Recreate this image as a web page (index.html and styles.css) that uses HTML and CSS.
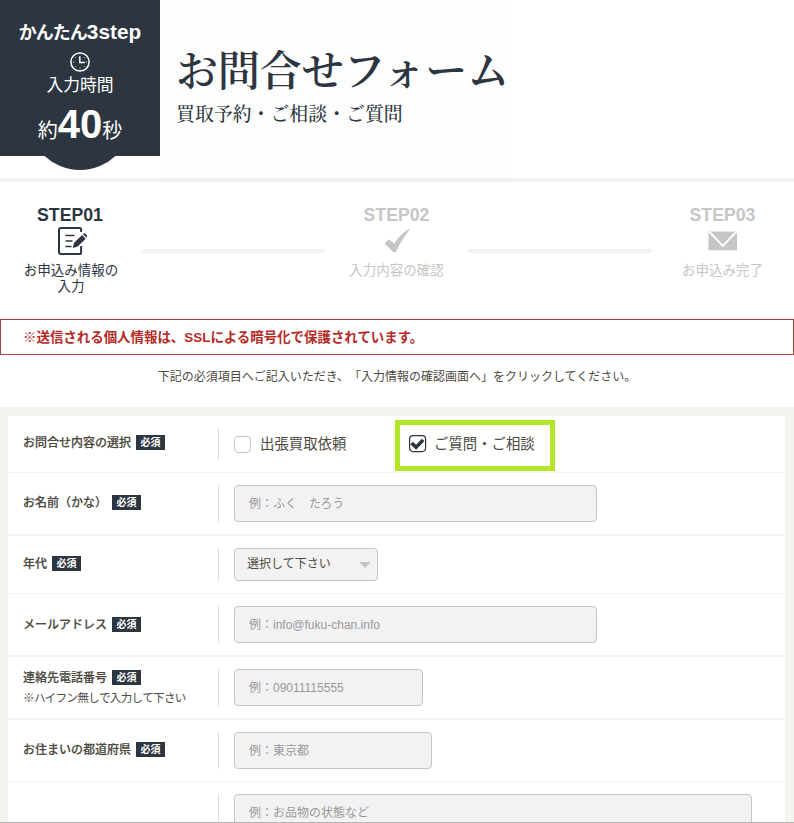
FILE: index.html
```html
<!DOCTYPE html>
<html lang="ja">
<head>
<meta charset="utf-8">
<title>お問合せフォーム</title>
<link rel="stylesheet" href="styles.css">
</head>
<body>
<header class="hero">
  <div class="badge">
    <div class="badge-top"><span class="kana">かんたん</span><span class="latin">3step</span></div>
    <svg class="clock" width="20" height="20" viewBox="0 0 20 20" fill="none" stroke="#fff"><circle cx="10" cy="10" r="9.1" stroke-width="1.5"/><path d="M9.8 4.2v6.3h5" stroke-width="1.5"/><path d="M10 16.6v-1M3.3 10h1M15.8 10h1M5.3 5.3l.6.6M14.1 5.900l.6-.6M5.300 14.700l.6-.6M14.100 14.100l.6.6" stroke-width=".9"/></svg>
    <div class="badge-mid">入力時間</div>
    <div class="badge-time"><span>約</span><b>40</b><span>秒</span></div>
  </div>
  <div class="hero-text">
    <h1>お問合せフォーム</h1>
    <p>買取予約・ご相談・ご質問</p>
  </div>
</header>

<section class="steps">
  <div class="step active">
    <strong>STEP01</strong>
    <svg width="30" height="28" viewBox="0 0 30 28" fill="none" stroke="currentColor"><path d="M23.1 5V2.6Q23.1 1 21.5 1H3Q1 1 1 3v22q0 2 2 2h18.5q1.6 0 1.6-1.6V19" stroke-width="2"/><path d="M7.5 8.5h9M7.5 14h7M7.5 19.5h6" stroke-width="1.6"/><path d="M14.800 21l1.300-5.200 8-7.700 3.600 3.700-8 7.600zM25 7.300l.7-.7q.8-.7 1.600 0l1.600 1.600q.8.8 0 1.600l-.6.7z" fill="currentColor" stroke="none"/></svg>
    <span>お申込み情報の<br>入力</span>
  </div>
  <i class="line"></i>
  <div class="step">
    <strong>STEP02</strong>
    <svg width="30" height="28" viewBox="0 0 30 28" fill="currentColor"><path d="M2.500 16.500l4.500-4.200 5.200 4.500Q18 7 26.500 2.500h1.600Q20.500 10.500 14 25H11.300Z"/></svg>
    <span>入力内容の確認</span>
  </div>
  <i class="line"></i>
  <div class="step">
    <strong>STEP03</strong>
    <svg width="30" height="28" viewBox="0 0 30 28"><path d="M.5 4.500H29v18.800H.5z" fill="currentColor"/><path d="M1 4.500l13.800 14.300L28.500 4.500" fill="none" stroke="#fff" stroke-width="1.900"/></svg>
    <span>お申込み完了</span>
  </div>
</section>

<p class="ssl">※送信される個人情報は、SSLによる暗号化で保護されています。</p>
<p class="intro">下記の必須項目へご記入いただき、「入力情報の確認画面へ」をクリックしてください。</p>

<main class="form">
  <div class="row choice">
    <div class="label"><b>お問合せ内容の選択</b><em>必須</em></div>
    <div class="field">
      <div class="option"><i class="box"></i><span>出張買取依頼</span></div>
      <div class="option marked"><svg class="box-on" width="18" height="18" viewBox="0 0 18 18"><rect x=".6" y=".6" width="16" height="16" rx="3.500" fill="#fff" stroke="#2d3640" stroke-width="1.200"/><path d="M1.300 9.300l2.600-2.500 3.200 2.900 5.800-6 2.600 2.400-8.400 8.600z" fill="#2d3640"/></svg><span>ご質問・ご相談</span></div>
    </div>
  </div>
  <div class="row thick">
    <div class="label"><b>お名前（かな）</b><em>必須</em></div>
    <div class="field"><div class="input">例：ふく　たろう</div></div>
  </div>
  <div class="row age">
    <div class="label"><b>年代</b><em>必須</em></div>
    <div class="field"><div class="select"><span>選択して下さい</span><i></i></div></div>
  </div>
  <div class="row thick mail">
    <div class="label"><b>メールアドレス</b><em>必須</em></div>
    <div class="field"><div class="input">例：info@fuku-chan.info</div></div>
  </div>
  <div class="row thick noted">
    <div class="label"><b>連絡先電話番号</b><em>必須</em><small>※ハイフン無しで入力して下さい</small></div>
    <div class="field"><div class="input tel">例：09011115555</div></div>
  </div>
  <div class="row">
    <div class="label"><b>お住まいの都道府県</b><em>必須</em></div>
    <div class="field"><div class="input pref">例：東京都</div></div>
  </div>
  <div class="row message">
    <div class="label"></div>
    <div class="field"><div class="input area">例：お品物の状態など</div></div>
  </div>
</main>
</body>
</html>
```
FILE: styles.css
```css
* { box-sizing: border-box; }
html, body { margin: 0; height: 823px; overflow: hidden; }
body {
  display: flex;
  flex-direction: column;
  background: #fff;
  border-bottom: 1px solid #b5b5b5;
  color: #4c4a3f;
  font-family: "Liberation Sans", "Noto Sans CJK JP", sans-serif;
  font-size: 12px;
  text-spacing-trim: space-all;
}
h1, p { margin: 0; }
em, i { font-style: normal; }
svg { display: block; flex: none; }

.hero {
  display: flex;
  flex: none;
  height: 182px;
  border-bottom: 4px solid #f2f2f2;
}
.badge {
  position: relative;
  display: flex;
  flex-direction: column;
  align-items: center;
  width: 160px;
  height: 156px;
  padding-top: 20px;
  background: #2d3640;
  color: #fff;
}
.badge::after {
  content: "";
  position: absolute;
  left: 28px;
  top: 66px;
  width: 104px;
  height: 104px;
  border-radius: 50%;
  background: #2d3640;
  clip-path: inset(90px 0 0 0);
}
.badge-top {
  display: flex;
  align-items: baseline;
  height: 24px;
  line-height: 24px;
  font-weight: bold;
}
.kana { font-size: 18px; letter-spacing: -1px; }
.latin { font-size: 20.800px; }
.clock { margin-top: 8px; }
.badge-mid { height: 24px; margin-top: 2px; font-size: 16.800px; line-height: 24px; }
.badge-time {
  display: flex;
  align-items: baseline;
  height: 44px;
  margin-top: 4px;
  font-size: 20px;
  line-height: 44px;
}
.badge-time b { font-size: 40px; }

.hero-text {
  width: 350px;
  padding: 38px 0 0 16px;
  background: #fdfdfd;
  color: #2d3640;
  font-family: "Noto Serif CJK JP", "Noto Serif JP", "Noto Sans CJK JP", serif;
  white-space: nowrap;
}
.hero-text h1 { font-size: 41.900px; font-weight: 600; line-height: 60px; }
.hero-text p { margin-top: 1px; font-size: 18.900px; font-weight: 500; line-height: 28px; }

.steps {
  display: grid;
  flex: none;
  grid-template-columns: 142px 183px 143px 183px 143px;
  height: 137px;
  padding-top: 23px;
}
.step {
  display: flex;
  flex-direction: column;
  align-items: center;
  color: #c6c6c6;
  text-align: center;
}
.step.active { color: #2d3640; }
.step.active strong { margin-right: 2px; }
.step strong { height: 20px; font-size: 17.700px; line-height: 20px; }
.step svg { margin: 2px 0 4px; }
.step.active svg { margin-left: 4px; }
.step span { margin-top: 4px; font-size: 13.500px; line-height: 16px; white-space: nowrap; }
.line { height: 4px; margin-top: 44px; background: #f2f2f2; }

.ssl {
  flex: none;
  height: 36px;
  padding-left: 22px;
  border: 1px solid #a94442;
  color: #b52b27;
  font-size: 13.450px;
  font-weight: bold;
  line-height: 35px;
}
.intro { flex: none; height: 52px; line-height: 45px; text-align: center; }

.form {
  flex: 1;
  min-height: 0;
  padding: 9px 9px 0 8px;
  overflow: hidden;
  background: #f4f4ee;
}
.row {
  display: grid;
  grid-template-columns: 211px 1fr;
  height: 62px;
  padding: 12px 0;
  border-bottom: 1px solid #f4f4ee;
  background: #fff;
}
.row.choice { height: 57px; }
.row.thick { height: 63px; border-bottom-width: 2px; }
.row.age { height: 58px; }
.label {
  display: flex;
  flex-wrap: wrap;
  align-content: flex-start;
  align-items: center;
  padding: 6px 0 0 15px;
  border-right: 1px solid #ddd;
}
.choice .label { padding-top: 3px; }
.age .label { padding-top: 4px; }
.mail .label { padding-top: 7px; }
.label b {
  height: 22px;
  font-weight: 500;
  line-height: 24px;
  -webkit-text-stroke: .2px currentColor;
}
.noted .label { padding-top: 0; }
.noted .label b { margin-top: -3px; }
.noted .label em { margin-top: -3px; }
.noted .label small {
  flex-basis: 100%;
  height: 18px;
  font-size: 11.600px;
  letter-spacing: -.7px;
  line-height: 20px;
  white-space: nowrap;
}
.label em {
  width: 29px;
  height: 15px;
  margin-left: 5px;
  background: #2d3640;
  color: #fff;
  font-size: 10px;
  font-weight: bold;
  line-height: 15px;
  text-align: center;
}
.field { display: flex; padding-left: 15px; }
.input {
  width: 363px;
  height: 37px;
  padding-left: 14px;
  border: 1px solid #c6c6c6;
  border-radius: 4px;
  background: #f2f2f2;
  color: #999;
  line-height: 36px;
}
.input.tel { width: 189px; }
.input.pref { width: 198px; }
.input.area { width: 518px; height: 90px; }
.select {
  display: flex;
  align-items: center;
  justify-content: space-between;
  width: 144px;
  height: 33px;
  padding: 0 6px 2px 12px;
  border: 1px solid #c6c6c6;
  border-radius: 4px;
  background: #f2f2f2;
  line-height: 20px;
}
.select i { border: 6px solid transparent; border-top-color: #c6c6c6; border-bottom: 0; margin-top: 2px; }
.message { height: 120px; }

.option {
  display: flex;
  align-items: center;
  width: 161px;
  height: 32px;
  font-size: 14.400px;
  line-height: 20px;
  white-space: nowrap;
}
.box { width: 17px; height: 17px; margin-right: 9px; border: 1px solid #c6c6c6; border-radius: 4px; }
.option.marked {
  width: 160px;
  height: 51px;
  margin: -8px 0 -11px;
  padding: 0 0 3px 9px;
  border: 5px solid #b3e629;
}
.box-on { margin-right: 7px; }
```
